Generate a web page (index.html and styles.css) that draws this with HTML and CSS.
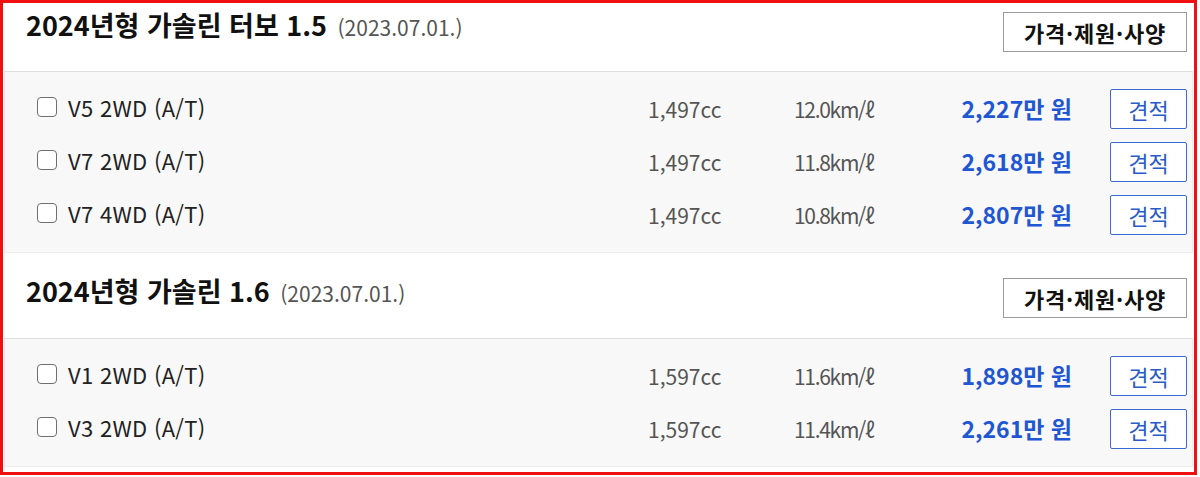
FILE: index.html
```html
<!DOCTYPE html>
<html lang="ko">
<head>
<meta charset="utf-8">
<title>트림</title>
<link rel="stylesheet" href="styles.css">
</head>
<body>
<div class="frame">
  <section class="section section--first">
    <div class="sec-head">
      <h2 class="sec-title">2024년형 가솔린 터보 1.5 <span class="sec-date">(2023.07.01.)</span></h2>
      <button class="spec-btn">가격·제원·사양</button>
    </div>
    <div class="panel">
      <div class="trim-row">
        <input type="checkbox" class="chk">
        <span class="trim-name">V5 2WD (A/T)</span>
        <span class="cc">1,497cc</span>
        <span class="eff">12.0km/ℓ</span>
        <span class="price">2,227만 원</span>
        <button class="quote-btn">견적</button>
      </div>
      <div class="trim-row">
        <input type="checkbox" class="chk">
        <span class="trim-name">V7 2WD (A/T)</span>
        <span class="cc">1,497cc</span>
        <span class="eff">11.8km/ℓ</span>
        <span class="price">2,618만 원</span>
        <button class="quote-btn">견적</button>
      </div>
      <div class="trim-row">
        <input type="checkbox" class="chk">
        <span class="trim-name">V7 4WD (A/T)</span>
        <span class="cc">1,497cc</span>
        <span class="eff">10.8km/ℓ</span>
        <span class="price">2,807만 원</span>
        <button class="quote-btn">견적</button>
      </div>
    </div>
  </section>
  <section class="section">
    <div class="sec-head">
      <h2 class="sec-title">2024년형 가솔린 1.6 <span class="sec-date">(2023.07.01.)</span></h2>
      <button class="spec-btn">가격·제원·사양</button>
    </div>
    <div class="panel">
      <div class="trim-row">
        <input type="checkbox" class="chk">
        <span class="trim-name">V1 2WD (A/T)</span>
        <span class="cc">1,597cc</span>
        <span class="eff">11.6km/ℓ</span>
        <span class="price">1,898만 원</span>
        <button class="quote-btn">견적</button>
      </div>
      <div class="trim-row">
        <input type="checkbox" class="chk">
        <span class="trim-name">V3 2WD (A/T)</span>
        <span class="cc">1,597cc</span>
        <span class="eff">11.4km/ℓ</span>
        <span class="price">2,261만 원</span>
        <button class="quote-btn">견적</button>
      </div>
    </div>
  </section>
</div>
</body>
</html>
```

FILE: styles.css
```css
* { box-sizing: border-box; }
html, body {
  margin: 0;
  padding: 0;
  background: #fff;
}
body {
  font-family: "Noto Sans CJK KR", "Noto Sans", sans-serif;
  color: #222;
}
.frame {
  width: 1197px;
  height: 475px;
  border: 3px solid #f01010;
  padding: 0 1px;
  overflow: hidden;
}
.sec-head {
  display: flex;
  justify-content: space-between;
  align-items: flex-start;
  height: 85px;
  padding: 22px 6px 0 22px;
}
.section--first .sec-head {
  height: 68px;
  padding-top: 6px;
}
.sec-title {
  margin: 0;
  font-size: 27px;
  line-height: 31px;
  font-weight: 700;
  color: #111;
}
.sec-date {
  font-size: 21px;
  font-weight: 400;
  color: #555;
  margin-left: 3px;
}
.spec-btn {
  margin-top: 3px;
  width: 184px;
  height: 40px;
  border: 1px solid #9a9a9a;
  background: #fff;
  font-family: inherit;
  font-size: 22px;
  font-weight: 700;
  letter-spacing: 0.8px;
  color: #111;
  padding: 0;
  line-height: 38px;
}
.panel {
  background: #f8f8f8;
  border: 1px solid #ededed;
  border-top-color: #dedede;
  padding: 10px 0 11px;
}
.trim-row {
  display: grid;
  grid-template-columns: 31px 1fr 146px 105px 173px 115px;
  align-items: center;
  height: 53px;
  padding: 0 5px 0 32px;
}
.chk {
  appearance: none;
  -webkit-appearance: none;
  margin: 0 0 4px 0;
  width: 20px;
  height: 20px;
  border: 1.5px solid #6f6f6f;
  border-radius: 4px;
  background: #fff;
}
.trim-name {
  font-size: 22px;
  letter-spacing: 0.3px;
  color: #222;
  margin-bottom: 4px;
}
.cc, .eff {
  font-size: 21px;
  color: #555;
}
.eff {
  letter-spacing: -1.3px;
}
.price {
  text-align: right;
  font-size: 23px;
  font-weight: 700;
  color: #1f56d2;
  margin-bottom: 2px;
}
.quote-btn {
  justify-self: end;
  width: 77px;
  height: 40px;
  border: 1px solid #3a6bd0;
  border-radius: 2px;
  background: #fff;
  color: #2a5bc6;
  font-family: inherit;
  font-size: 22px;
  line-height: 38px;
  padding: 0;
}
```
